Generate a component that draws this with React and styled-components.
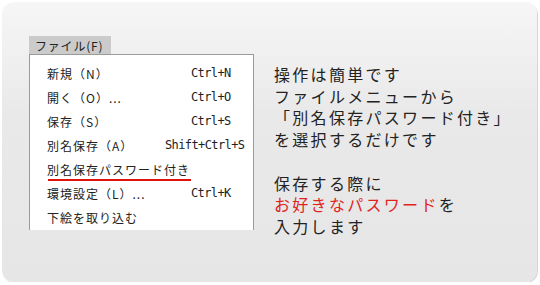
import styled, { createGlobalStyle } from 'styled-components';

const GlobalStyle = createGlobalStyle`
	html, body {
		margin: 0;
		padding: 0;
		background: #ffffff;
	}
	body {
		font-family: "Noto Sans CJK JP", "Noto Sans", sans-serif;
		color: #222;
	}
`;

// Rounded grey card that holds everything
const Panel = styled.div`
	margin: 2px 0 0 2px;
	width: 535px;
	height: 280px;
	box-sizing: border-box;
	border-radius: 12px;
	background: linear-gradient(#f6f6f6, #e9e9e9 40%, #e6e6e6);
	box-shadow: 1px 1px 1px rgba(0, 0, 0, 0.18);
	display: flex;
	align-items: flex-start;
	padding: 34px 0 0 27px;
`;

const MenuColumn = styled.div`
	display: flex;
	flex-direction: column;
	align-items: flex-start;
	width: 225px;
`;

const MenuTab = styled.div`
	height: 18px;
	padding: 0 6px;
	width: 70px;
	background: #cbcbcb;
	font-size: 12px;
	letter-spacing: 0.8px;
	line-height: 19px;
	color: #222;
	white-space: nowrap;
`;

const MenuBox = styled.ul`
	list-style: none;
	margin: 0;
	width: 100%;
	box-sizing: border-box;
	background: #fff;
	border: 1px solid #9a9a9a;
	border-bottom: none;
	padding: 6px 0 1px 17px;
	height: 176px;
`;

const Item = styled.li`
	display: grid;
	grid-template-columns: 144px auto;
	height: 24px;
	align-items: center;
	font-size: 12px;
	white-space: nowrap;
`;

const Label = styled.span`
	position: relative;
	justify-self: start;
	letter-spacing: 1px;
	${props => props.$marked && `
		&::after {
			content: "";
			position: absolute;
			left: 1px;
			right: -1px;
			bottom: -3px;
			height: 2px;
			background: #e0120c;
		}
	`}
`;

const Shortcut = styled.span`
	font-family: "DejaVu Sans Mono", monospace;
	font-size: 12px;
	letter-spacing: -0.6px;
	margin-left: ${props => props.$shift}px;
`;

const Note = styled.div`
	margin: 28px 0 0 20px;
	font-size: 16px;
	letter-spacing: 2.3px;
	line-height: 21.7px;
	color: #222;
	white-space: nowrap;
`;

const Line = styled.div`
	min-height: 21.7px;
`;

const Red = styled.span`
	color: #e0241b;
`;

const items = [
	{ label: '新規（N）', key: 'Ctrl+N' },
	{ label: '開く（O）...', key: 'Ctrl+O' },
	{ label: '保存（S）', key: 'Ctrl+S' },
	{ label: '別名保存（A）', key: 'Shift+Ctrl+S', shift: -26 },
	{ label: '別名保存パスワード付き', marked: true },
	{ label: '環境設定（L）...', key: 'Ctrl+K' },
	{ label: '下絵を取り込む' },
];

const App = () => (
	<>
		<GlobalStyle />
		<Panel>
			<MenuColumn>
				<MenuTab>ファイル(F)</MenuTab>
				<MenuBox>
					{items.map(item => (
						<Item key={item.label}>
							<Label $marked={item.marked}>{item.label}</Label>
							{item.key && <Shortcut $shift={item.shift || 0}>{item.key}</Shortcut>}
						</Item>
					))}
				</MenuBox>
			</MenuColumn>
			<Note>
				<Line>操作は簡単です</Line>
				<Line>ファイルメニューから</Line>
				<Line>「別名保存パスワード付き」</Line>
				<Line>を選択するだけです</Line>
				<Line />
				<Line>保存する際に</Line>
				<Line><Red>お好きなパスワード</Red>を</Line>
				<Line>入力します</Line>
			</Note>
		</Panel>
	</>
);

export default App;
